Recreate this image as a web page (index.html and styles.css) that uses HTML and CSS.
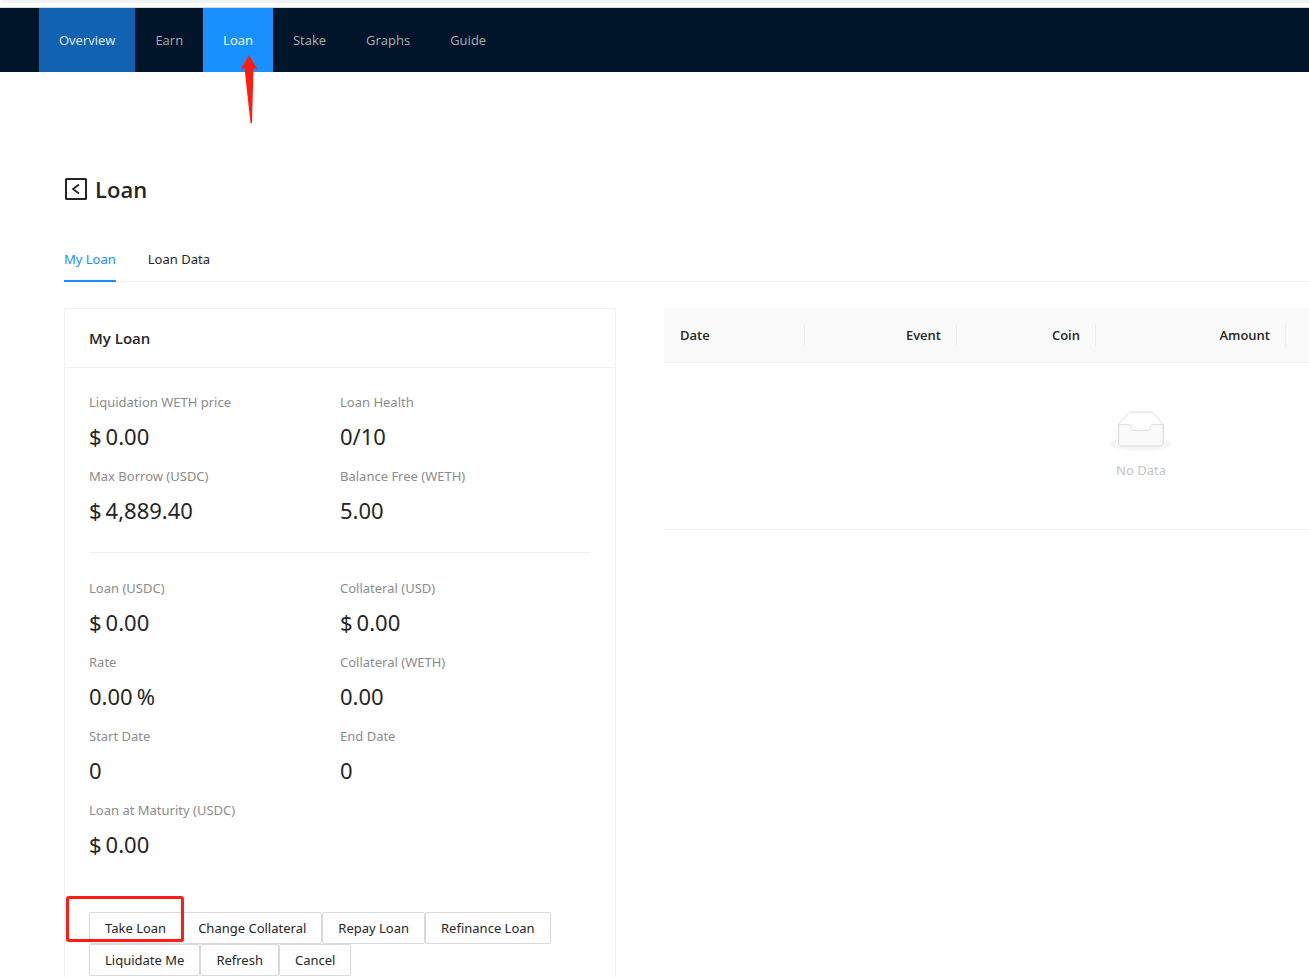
FILE: index.html
```html
<!DOCTYPE html>
<html lang="en">
<head>
<meta charset="utf-8">
<title>Loan</title>
<link rel="stylesheet" href="styles.css">
</head>
<body>
<div class="browser-edge"><div class="browser-bar"></div></div>
<nav class="nav">
  <a class="nav-item nav-overview" href="#">Overview</a>
  <a class="nav-item" href="#">Earn</a>
  <a class="nav-item nav-active" href="#">Loan
    <svg class="arrow" viewBox="0 0 18 68" aria-hidden="true"><path d="M9 0 17.500 14.500 13.500 13 12 68 10.500 68 4.500 13 0.500 15Z" fill="#ff1d12"/></svg>
  </a>
  <a class="nav-item" href="#">Stake</a>
  <a class="nav-item" href="#">Graphs</a>
  <a class="nav-item" href="#">Guide</a>
</nav>
<main class="page">
  <header class="page-title">
    <button class="back" aria-label="Back">
      <svg viewBox="0 0 22 22" width="22" height="22" fill="none" stroke="#262626" stroke-width="2"><rect x="1" y="1" width="20" height="20" rx="0.500"/><path d="M14 6.500 8 11 14 15.500" stroke-width="1.800"/></svg>
    </button>
    <h1>Loan</h1>
  </header>
  <div class="tabs" role="tablist">
    <button class="tab tab-active" role="tab" aria-selected="true">My Loan</button>
    <button class="tab" role="tab" aria-selected="false">Loan Data</button>
  </div>
  <div class="columns">
    <section class="card">
      <h2 class="card-head">My Loan</h2>
      <div class="card-body">
        <dl class="stats">
          <div><dt>Liquidation WETH price</dt><dd><span>$</span><span>0.00</span></dd></div>
          <div><dt>Loan Health</dt><dd>0/10</dd></div>
          <div><dt>Max Borrow (USDC)</dt><dd><span>$</span><span>4,889.40</span></dd></div>
          <div><dt>Balance Free (WETH)</dt><dd>5.00</dd></div>
        </dl>
        <hr class="divider">
        <dl class="stats">
          <div><dt>Loan (USDC)</dt><dd><span>$</span><span>0.00</span></dd></div>
          <div><dt>Collateral (USD)</dt><dd><span>$</span><span>0.00</span></dd></div>
          <div><dt>Rate</dt><dd><span>0.00</span><span>%</span></dd></div>
          <div><dt>Collateral (WETH)</dt><dd>0.00</dd></div>
          <div><dt>Start Date</dt><dd>0</dd></div>
          <div><dt>End Date</dt><dd>0</dd></div>
          <div><dt>Loan at Maturity (USDC)</dt><dd><span>$</span><span>0.00</span></dd></div>
        </dl>
        <div class="actions">
          <div class="marked"><button class="btn">Take Loan</button></div>
          <button class="btn">Change Collateral</button>
          <button class="btn">Repay Loan</button>
          <button class="btn">Refinance Loan</button>
          <button class="btn">Liquidate Me</button>
          <button class="btn">Refresh</button>
          <button class="btn">Cancel</button>
        </div>
      </div>
    </section>
    <table class="events">
      <colgroup><col class="c-date"><col class="c-event"><col class="c-coin"><col class="c-amount"><col></colgroup>
      <thead>
        <tr><th class="left"><div>Date</div></th><th><div>Event</div></th><th><div>Coin</div></th><th><div>Amount</div></th><td></td></tr>
      </thead>
      <tbody>
        <tr><td colspan="5" class="empty">
          <svg width="62" height="40" viewBox="0 0 64 41" aria-hidden="true">
            <g transform="translate(0 1)" fill="none" fill-rule="evenodd">
              <ellipse fill="#f5f5f5" cx="32" cy="33" rx="32" ry="7"/>
              <g stroke="#d9d9d9">
                <path d="M55 12.760 44.854 1.258C44.367.474 43.656 0 42.907 0H21.093c-.749 0-1.460.474-1.947 1.257L9 12.761V22h46v-9.240z"/>
                <path fill="#fafafa" d="M41.613 15.931c0-1.605.994-2.930 2.227-2.931H55v18.137C55 33.260 53.680 35 52.050 35h-40.100C10.320 35 9 33.259 9 31.137V13h11.160c1.233 0 2.227 1.323 2.227 2.928v.022c0 1.605 1.005 2.901 2.237 2.901h14.752c1.232 0 2.237-1.308 2.237-2.913v-.007z"/>
              </g>
            </g>
          </svg>
          <div>No Data</div>
        </td></tr>
      </tbody>
    </table>
  </div>
</main>
</body>
</html>
```
FILE: styles.css
```css
* { box-sizing: border-box; }
body {
  margin: 0;
  height: 100vh;
  overflow: hidden;
  background: #fff;
  color: #262626;
  font: 13px/22px "Noto Sans", "Open Sans", sans-serif;
}
button { font: inherit; color: inherit; background: none; border: 0; padding: 0; cursor: pointer; }
.browser-edge { height: 8px; border-bottom: 1px solid #dcdcdc; }
.browser-bar { height: 3px; margin-left: 2px; background: #f1f2f2; border-bottom-left-radius: 8px 3px; }

.nav { display: flex; height: 64px; padding-left: 39px; background: #001529; font-family: "Open Sans", sans-serif; }
.nav-item {
  position: relative;
  padding: 0 20px;
  line-height: 64px;
  color: #a6adb4;
  text-decoration: none;
}
.nav-overview { background: #1163b1; color: #e3edf6; }
.nav-active { background: #1890ff; color: #fff; }
.arrow { position: absolute; z-index: 1; left: 37px; top: 47px; width: 18px; height: 68px; }

.page { padding: 97px 0 0 64px; overflow: hidden; }
.page-title { display: flex; align-items: center; gap: 8px; height: 40px; padding-left: 1px; }
.page-title h1 { margin: 0; font: 600 22px/40px "Open Sans", sans-serif; }
.back, .back svg { display: block; }

.tabs { display: flex; gap: 32px; margin-top: 27px; border-bottom: 1px solid #f0f0f0; }
.tab { padding: 12px 0 10px; margin-bottom: -1px; border-bottom: 2px solid transparent; }
.tab-active { color: #1890ff; border-color: #1890ff; }

.columns {
  display: grid;
  grid-template-columns: minmax(552px, 1fr) minmax(954px, 2fr);
  gap: 48px;
  align-items: start;
  margin-top: 26px;
}
.card { border: 1px solid #f0f0f0; border-radius: 2px; }
.card-head {
  margin: 0;
  padding: 17px 24px;
  border-bottom: 1px solid #f0f0f0;
  font: 600 15px/24px "Open Sans", sans-serif;
}
.card-body { padding: 23px 24px 24px; }
.stats { display: grid; grid-template-columns: 1fr 1fr; row-gap: 10px; margin: 0; }
.stats dt { margin-bottom: 4px; color: #8c8c8c; }
.stats dd { display: flex; gap: 4px; margin: 0; font-size: 22px; line-height: 38px; }
.divider { height: 1px; margin: 23px 0 24px; border: 0; background: #f0f0f0; }

.actions { display: flex; flex-wrap: wrap; margin-top: 49px; }
.btn {
  height: 32px;
  padding: 0 15px;
  background: #fff;
  border: 1px solid #d9d9d9;
  border-radius: 2px;
}
.marked { position: relative; }
.marked::after {
  content: "";
  position: absolute;
  inset: -16px -2px 2px -23px;
  border: 3px solid #ff1d12;
  border-radius: 3px;
  pointer-events: none;
}

.events { width: 100%; table-layout: fixed; border-collapse: collapse; }
.c-date { width: 141px; }
.c-event { width: 152px; }
.c-coin { width: 139px; }
.c-amount { width: 190px; }
.events thead { background: #fafafa; }
.events tr { border-bottom: 1px solid #f0f0f0; }
.events th { padding: 16px 0; font-family: "Open Sans", sans-serif; font-weight: 600; text-align: right; }
.events th div { padding: 0 15px 0 16px; border-right: 1px solid #f0f0f0; }
.events .left { text-align: left; }
.events .empty { height: 167px; padding: 16px; text-align: center; color: #c4c4c4; }
.empty svg { display: block; margin: 0 auto 8px; }
```
